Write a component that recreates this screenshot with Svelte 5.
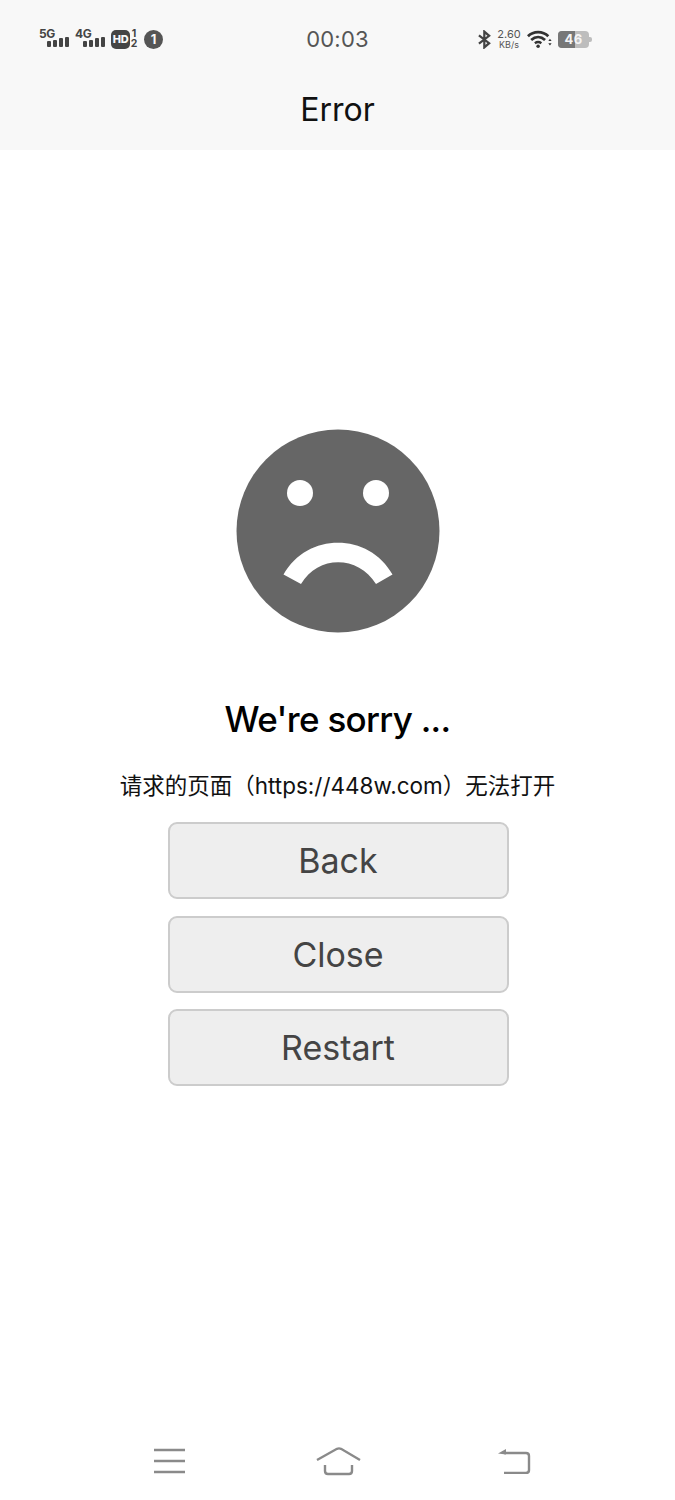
<script>
  const buttons = ['Back', 'Close', 'Restart'];
</script>

<div class="page">
  <header class="top">
    <div class="status">
      <div class="left">
        <div class="net">
          <span class="gen">5G</span>
          <svg class="bars" width="22" height="10" viewBox="0 0 22 10"><rect x="0" y="4" width="4" height="6" rx="1"/><rect x="6" y="3" width="4" height="7" rx="1"/><rect x="12" y="1" width="4" height="9" rx="1"/><rect x="18" y="0" width="4" height="10" rx="1"/></svg>
        </div>
        <div class="net">
          <span class="gen">4G</span>
          <svg class="bars" width="22" height="10" viewBox="0 0 22 10"><rect x="0" y="4" width="4" height="6" rx="1"/><rect x="6" y="3" width="4" height="7" rx="1"/><rect x="12" y="1" width="4" height="9" rx="1"/><rect x="18" y="0" width="4" height="10" rx="1"/></svg>
        </div>
        <div class="hd">
          <span class="hdbox">HD</span>
          <span class="sims"><span>1</span><span>2</span></span>
        </div>
        <span class="one">1</span>
      </div>
      <div class="clock">00:03</div>
      <div class="right">
        <svg width="13" height="19" viewBox="0 0 14 20" fill="none" stroke="#444" stroke-width="2.4"><path d="M1 5.5 L12 14 L6.8 18.5 V1.5 L12 6 L1 14.5"/></svg>
        <div class="speed"><span class="val">2.60</span><span class="unit">KB/s</span></div>
        <svg width="25" height="19" viewBox="0 0 27 20" fill="none" stroke="#333"><path d="M1 6.5 C7 0.5 17 0.5 23 6.5" stroke-width="3"/><path d="M4.5 10.5 C9 6.5 15 6.5 19.5 10.5" stroke-width="3"/><path d="M8.5 14 C10.5 12.5 13.5 12.5 15.5 14" stroke-width="2.6"/><circle cx="12" cy="17.4" r="1.9" fill="#333" stroke="none"/><path d="M23 11.5 l1.8 -2.4 l1.8 2.4z M23 14 l1.8 2.4 l1.8 -2.4z" fill="#333" stroke="none"/></svg>
        <div class="battery"><span class="fill"></span><span class="level">46</span><span class="cap"></span></div>
      </div>
    </div>
    <div class="title">Error</div>
  </header>

  <main class="main">
    <svg class="face" width="204" height="204" viewBox="0 0 204 204">
      <circle cx="102" cy="102" r="101.5" fill="#666"/>
      <circle cx="64" cy="64" r="13" fill="#fff"/>
      <circle cx="140" cy="64" r="13" fill="#fff"/>
      <path d="M47.5 145.5 C71 103 133 103 156.5 145.5 L140 155 C122 126 82 126 65 155 Z" fill="#fff"/>
    </svg>
    <h1>We're sorry ...</h1>
    <p>请求的页面（https://448w.com）无法打开</p>
    <div class="actions">
      {#each buttons as b}
        <button>{b}</button>
      {/each}
    </div>
  </main>

  <nav class="nav">
    <svg width="32" height="26" viewBox="0 0 32 26" stroke="#8a8a8a" stroke-width="2.4" fill="none"><path d="M0 2 H31 M0 13 H31 M0 24 H31"/></svg>
    <svg width="46" height="30" viewBox="0 0 46 30" stroke="#8a8a8a" stroke-width="2.4" fill="none"><path d="M1 14 L21 2.8 Q23 2 25 2.8 L44 14"/><path d="M9 19 V25 Q9 28 12 28 H33 Q36 28 36 25 V19"/></svg>
    <svg width="34" height="26" viewBox="0 0 34 26" stroke="#8a8a8a" stroke-width="2.4" fill="none"><path d="M7 5 H29 Q32 5 32 8 V22 Q32 25 29 25 H7"/><path d="M1 5.5 L9 1 V6.5 Z" fill="#8a8a8a" stroke="none"/></svg>
  </nav>
</div>

<style>
  :global(body) { margin: 0; background: #fff; }
  .page {
    width: 675px;
    height: 1500px;
    display: flex;
    flex-direction: column;
    font-family: Inter, "Noto Sans CJK SC", sans-serif;
    overflow: hidden;
  }
  .top { background: #f8f8f8; height: 150px; display: flex; flex-direction: column; }
  .status {
    height: 78px;
    display: grid;
    grid-template-columns: 1fr auto 1fr;
    align-items: center;
    padding: 0 39px;
    color: #444;
  }
  .left { display: flex; align-items: center; }
  .net { position: relative; width: 31px; height: 20px; margin-right: 5px; }
  .gen { position: absolute; left: 0; top: -1px; font-size: 12px; line-height: 12px; font-weight: 700; letter-spacing: -0.3px; color: #444; }
  .bars { position: absolute; left: 8px; bottom: 2px; fill: #444; }
  .hd { display: flex; align-items: center; }
  .hdbox {
    background: #444; color: #f8f8f8; border-radius: 5px;
    width: 19px; height: 19px; font-size: 11px; font-weight: 800;
    display: flex; align-items: center; justify-content: center; letter-spacing: -0.3px;
  }
  .sims { display: flex; flex-direction: column; align-items: center; width: 8px; font-size: 10.5px; line-height: 10px; font-weight: 700; color: #444; }
  .one {
    margin-left: 6px; width: 19px; height: 19px; border-radius: 50%; background: #555; color: #f8f8f8;
    font-size: 13px; font-weight: 700; display: flex; align-items: center; justify-content: center;
  }
  .clock { font-size: 22px; color: #555; letter-spacing: 0.2px; }
  .right { display: flex; align-items: center; justify-content: flex-end; gap: 6px; padding-right: 47px; }
  .speed { display: flex; flex-direction: column; align-items: center; color: #555; width: 24px; }
  .val { font-size: 11px; line-height: 12px; }
  .unit { font-size: 9px; line-height: 10px; }
  .battery {
    position: relative; width: 31px; height: 17px; border-radius: 4px; background: #bdbdbd;
    display: flex; align-items: center; justify-content: center;
  }
  .fill { position: absolute; left: 0; top: 0; bottom: 0; width: 17px; background: #777; border-radius: 4px 0 0 4px; }
  .level { position: relative; font-size: 13px; font-weight: 700; color: #f4f4f4; letter-spacing: 0.5px; }
  .cap { position: absolute; right: -3px; top: 6px; width: 3px; height: 5px; background: #bdbdbd; border-radius: 0 2px 2px 0; }
  .title {
    height: 62px; display: flex; align-items: center; justify-content: center;
    font-size: 32px; color: #111;
  }
  .main { flex: 1; display: flex; flex-direction: column; align-items: center; padding-top: 279px; }
  .face { display: block; }
  h1 {
    margin: 61px 0 0; font-size: 35px; line-height: 50px;
    font-weight: 500; color: #000; letter-spacing: -0.7px;
  }
  p { margin: 26px 0 0; font-size: 22.5px; line-height: 32px; color: #111; }
  .actions { margin: 20px 0 0 1px; display: flex; flex-direction: column; gap: 16.5px; }
  button {
    width: 341px; height: 77px; box-sizing: border-box; background: #eee; border: 2px solid #ccc;
    border-radius: 9px; font-family: inherit; font-size: 34px; color: #444; padding: 0;
  }
  .nav {
    height: 66px; display: flex; align-items: flex-start; padding: 0 0 0 154px;
  }
  .nav svg:nth-child(1) { margin-right: 130px; margin-top: 14px; }
  .nav svg:nth-child(2) { margin-right: 135px; margin-top: 12px; }
  .nav svg:nth-child(3) { margin-top: 14px; }
</style>
